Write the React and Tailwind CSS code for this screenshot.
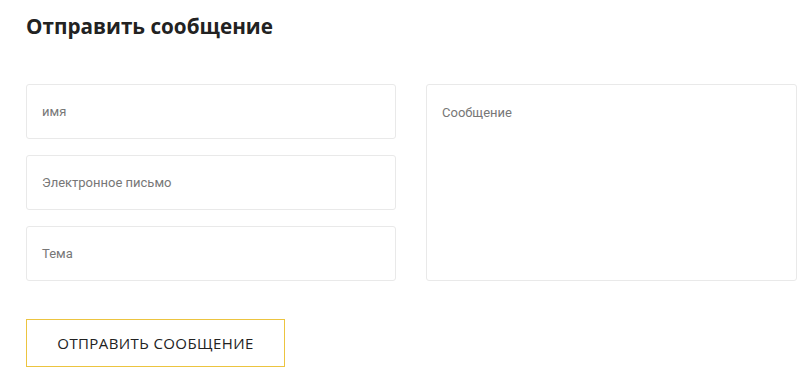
const fields = ["имя", "Электронное письмо", "Тема"];

export default function App() {
  return (
    <div className="w-[804px] h-[377px] bg-white pl-[26px] pr-[8px] pt-[12px] overflow-hidden">
      <h2 className="font-['Open_Sans',sans-serif] text-[20.7px] leading-[28px] font-bold text-[#222]">
        Отправить сообщение
      </h2>

      <div className="mt-[44px] flex gap-[30px]">
        <div className="flex flex-col gap-[16px] w-[370px] shrink-0">
          {fields.map((label) => (
            <div
              key={label}
              className="h-[55px] border border-[#e9e9e9] rounded-[3px] px-[15px] flex items-center font-['Roboto',sans-serif] text-[13px] text-[#777]"
            >
              {label}
            </div>
          ))}
        </div>
        <div className="w-[371px] shrink-0 h-[197px] border border-[#e9e9e9] rounded-[3px] px-[15px] pt-[18px] font-['Roboto',sans-serif] text-[13px] text-[#777]">
          Сообщение
        </div>
      </div>

      <button
        type="button"
        className="mt-[38px] w-[259px] h-[48px] border border-[#ecc440] font-['Open_Sans',sans-serif] text-[15px] font-medium text-[#222] uppercase tracking-[0.4px]"
      >
        Отправить сообщение
      </button>
    </div>
  );
}
